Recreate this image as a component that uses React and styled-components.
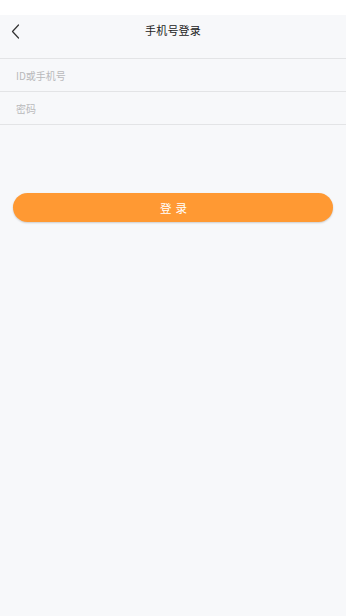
import React from "react";
import styled, { createGlobalStyle } from "styled-components";

const Global = createGlobalStyle`
  html, body { margin: 0; padding: 0; background: #f7f8fa; }
  body { font-family: "Noto Sans CJK SC", "Noto Sans", sans-serif; }
  * { box-sizing: border-box; }
`;

const Page = styled.div`
  min-height: 616px;
  background: #f7f8fa;
  display: flex;
  flex-direction: column;
`;

const StatusBar = styled.div`
  height: 15px;
  background: #ffffff;
`;

const NavBar = styled.div`
  height: 44px;
  display: flex;
  align-items: center;
  justify-content: center;
  position: relative;
  border-bottom: 1px solid #e3e4e6;
`;

const Back = styled.button`
  position: absolute;
  left: 8px;
  top: 8px;
  width: 14px;
  height: 16px;
  padding: 0;
  border: 0;
  background: transparent;
  display: flex;
  align-items: center;
  justify-content: center;
`;

const Title = styled.div`
  font-size: 11px;
  color: #222;
  letter-spacing: 0.2px;
  margin-top: -14px;
`;

const Field = styled.div`
  height: 33px;
  display: flex;
  align-items: center;
  padding: 0 16px;
  border-bottom: 1px solid #e3e4e6;
`;

const Input = styled.input`
  border: 0;
  outline: none;
  background: transparent;
  font-family: inherit;
  font-size: 10px;
  color: #333;
  width: 100%;
  padding: 0;
  &::placeholder { color: #b9b9bb; }
`;

const ButtonWrap = styled.div`
  padding: 68px 13px 0;
`;

const LoginButton = styled.button`
  width: 100%;
  height: 29px;
  border: 0;
  border-radius: 15px;
  background: #ff9933;
  color: #fff;
  font-family: inherit;
  font-size: 11.5px;
  letter-spacing: 4px;
  box-shadow: 0 1px 2px rgba(0, 0, 0, 0.18);
  padding: 0 0 0 5px;
`;

export default function App() {
  return (
    <Page>
      <Global />
      <StatusBar />
      <NavBar>
        <Back aria-label="back">
          <svg width="9" height="15" viewBox="0 0 9 15" fill="none">
            <path d="M7.5 1 L1.5 7.5 L7.5 14" stroke="#333" strokeWidth="1.2" strokeLinecap="round" strokeLinejoin="round" />
          </svg>
        </Back>
        <Title>手机号登录</Title>
      </NavBar>
      <Field>
        <Input placeholder="ID或手机号" />
      </Field>
      <Field>
        <Input type="password" placeholder="密码" />
      </Field>
      <ButtonWrap>
        <LoginButton>登录</LoginButton>
      </ButtonWrap>
    </Page>
  );
}
